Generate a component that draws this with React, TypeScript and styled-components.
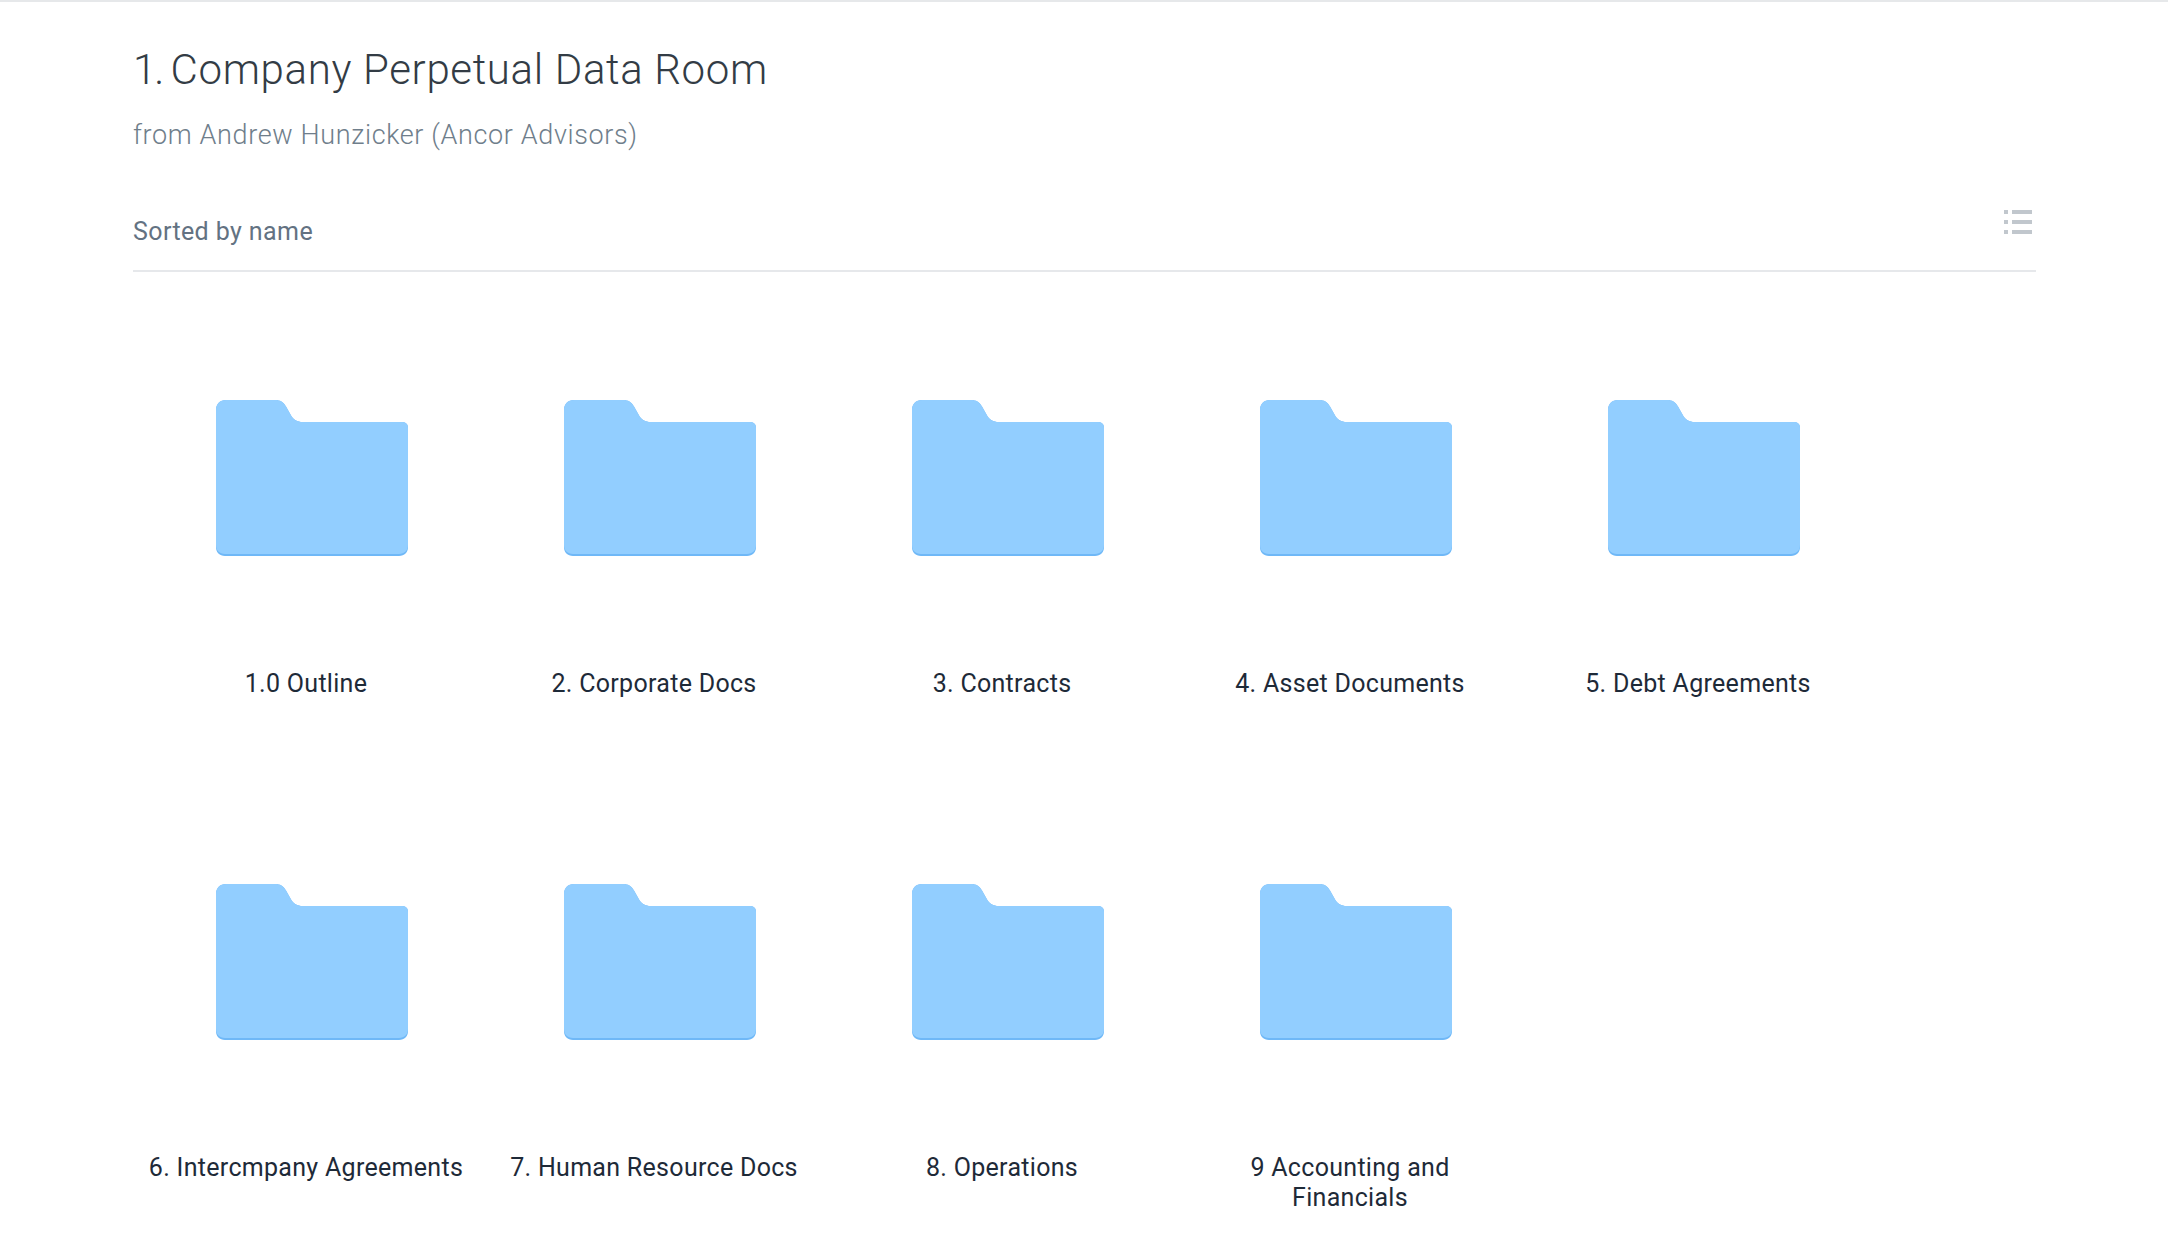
import React from "react";
import styled, { createGlobalStyle } from "styled-components";

const GlobalStyle = createGlobalStyle`
  html, body {
    margin: 0;
    padding: 0;
    background: #ffffff;
  }
  body {
    font-family: Roboto, "Liberation Sans", sans-serif;
  }
`;

const Page = styled.div`
  height: 1257px;
  overflow: hidden;
  box-sizing: border-box;
  border-top: 2px solid #e6e8ea;
  padding: 44px 132px 0 133px;
`;

const Title = styled.h1`
  margin: 0;
  font-size: 42px;
  line-height: 48px;
  font-weight: 300;
  letter-spacing: 0.65px;
  color: #333c45;
`;

const TitleNumber = styled.span`
  letter-spacing: -2px;
`;

const Subtitle = styled.div`
  margin-top: 25px;
  font-size: 27px;
  line-height: 32px;
  font-weight: 300;
  letter-spacing: 0.63px;
  color: #6f7e8b;
`;

const SortBar = styled.div`
  margin-top: 42px;
  height: 79px;
  box-sizing: border-box;
  border-bottom: 2px solid #e6e8eb;
  display: flex;
  justify-content: space-between;
  align-items: flex-start;
`;

const SortLabel = styled.span`
  margin-top: 24px;
  font-size: 25px;
  line-height: 30px;
  letter-spacing: 0.4px;
  color: #637282;
`;

const ListButton = styled.svg`
  display: block;
  margin: 17px 4px 0 0;
`;

const Grid = styled.div`
  display: grid;
  grid-template-columns: repeat(5, 348px);
  grid-auto-rows: 484px;
  margin-left: -1px;
  padding-top: 128px;
`;

const Cell = styled.div`
  display: flex;
  flex-direction: column;
  align-items: center;
`;

const Folder = styled.svg`
  display: block;
  margin-left: 12px;
`;

const Label = styled.div`
  margin-top: 113px;
  width: 318px;
  text-align: center;
  font-size: 25px;
  line-height: 30px;
  letter-spacing: 0.3px;
  color: #1e2a38;
`;

const folders = [
  "1.0 Outline",
  "2. Corporate Docs",
  "3. Contracts",
  "4. Asset Documents",
  "5. Debt Agreements",
  "6. Intercmpany Agreements",
  "7. Human Resource Docs",
  "8. Operations",
  "9 Accounting and Financials",
];

const FolderIcon = () => (
  <Folder width="192" height="156" viewBox="0 0 192 156">
    <path
      d="M10 0H59C64 0 67.5 2 70 6.5L74.5 14.5C77.5 20 81 22 87 22H186C190 22 192 24.5 192 28V147C192 152.5 188.5 156 183 156H9C3.5 156 0 152.5 0 147V10C0 4 4 0 10 0Z"
      fill="#6fb8f7"
    />
    <path
      d="M10 0H59C64 0 67.5 2 70 6.5L74.5 14.5C77.5 20 81 22 87 22H186C190 22 192 24.5 192 28V145C192 150.5 188.5 154 183 154H9C3.5 154 0 150.5 0 145V10C0 4 4 0 10 0Z"
      fill="#92ceff"
    />
  </Folder>
);

const App: React.FC = () => {
  return (
    <Page>
      <GlobalStyle />
      <Title>
        <TitleNumber>1. </TitleNumber>Company Perpetual Data Room
      </Title>
      <Subtitle>from Andrew Hunzicker (Ancor Advisors)</Subtitle>
      <SortBar>
        <SortLabel>Sorted by name</SortLabel>
        <ListButton width="28" height="24" viewBox="0 0 28 24" fill="#c1c7cd">
          <rect x="0" y="0" width="4" height="4" />
          <rect x="8" y="0" width="20" height="4" />
          <rect x="0" y="10" width="4" height="4" />
          <rect x="8" y="10" width="20" height="4" />
          <rect x="0" y="20" width="4" height="4" />
          <rect x="8" y="20" width="20" height="4" />
        </ListButton>
      </SortBar>
      <Grid>
        {folders.map((name) => (
          <Cell key={name}>
            <FolderIcon />
            <Label>{name}</Label>
          </Cell>
        ))}
      </Grid>
    </Page>
  );
};

export default App;
